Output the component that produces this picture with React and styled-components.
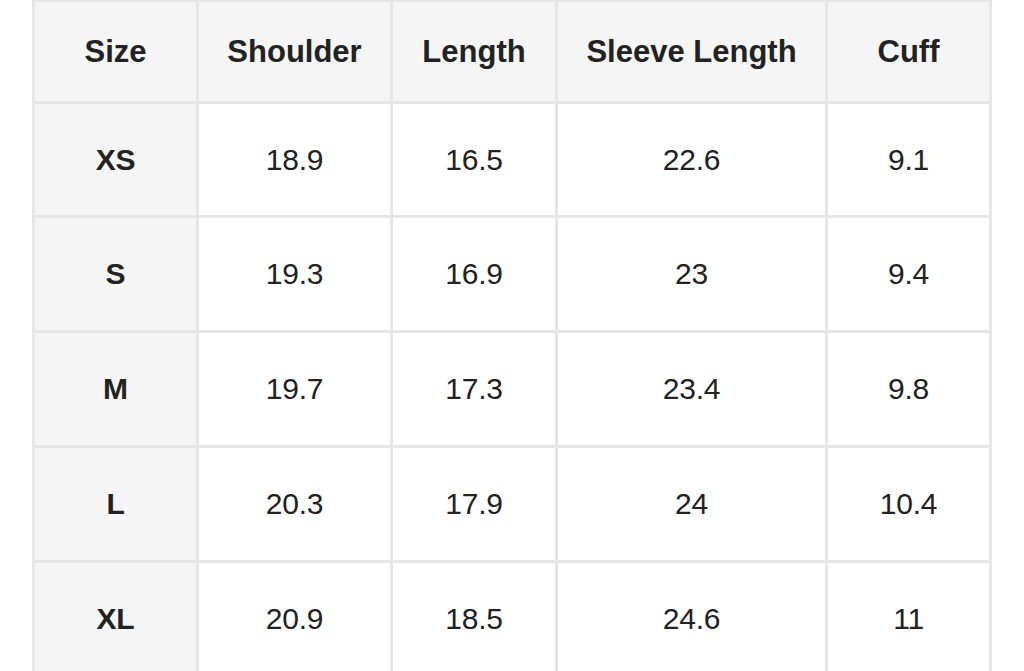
import React from "react";
import styled, { createGlobalStyle } from "styled-components";

const GlobalStyle = createGlobalStyle`
  body {
    margin: 0;
    background: #fff;
    font-family: "Liberation Sans", Arial, sans-serif;
    overflow: hidden;
  }
`;

const Page = styled.div`
  padding-left: 32px;
  margin-top: -1px;
`;

const SizeGrid = styled.div`
  display: grid;
  width: max-content;
  grid-template-columns: 161px 191px 162px 267px 161px;
  grid-template-rows: 99px 111px;
  grid-auto-rows: 112px;
  gap: 3px;
  padding: 3px;
  background: #e6e6e6;
`;

const Cell = styled.div`
  display: flex;
  align-items: center;
  justify-content: center;
  background: ${(p) => (p.$shaded ? "#f5f5f5" : "#fff")};
  color: #222;
  font-size: ${(p) => (p.$head ? "31px" : "30px")};
  font-weight: ${(p) => (p.$bold ? 700 : 400)};
  letter-spacing: ${(p) => (p.$head ? "0" : "-0.2px")};
`;

const headers = ["Size", "Shoulder", "Length", "Sleeve Length", "Cuff"];

const rows = [
  ["XS", "18.9", "16.5", "22.6", "9.1"],
  ["S", "19.3", "16.9", "23", "9.4"],
  ["M", "19.7", "17.3", "23.4", "9.8"],
  ["L", "20.3", "17.9", "24", "10.4"],
  ["XL", "20.9", "18.5", "24.6", "11"],
];

export default function App() {
  return (
    <Page>
      <GlobalStyle />
      <SizeGrid>
        {headers.map((h) => (
          <Cell key={h} $shaded $bold $head>
            {h}
          </Cell>
        ))}
        {rows.map((row) =>
          row.map((val, i) => (
            <Cell key={row[0] + i} $shaded={i === 0} $bold={i === 0}>
              {val}
            </Cell>
          ))
        )}
      </SizeGrid>
    </Page>
  );
}
